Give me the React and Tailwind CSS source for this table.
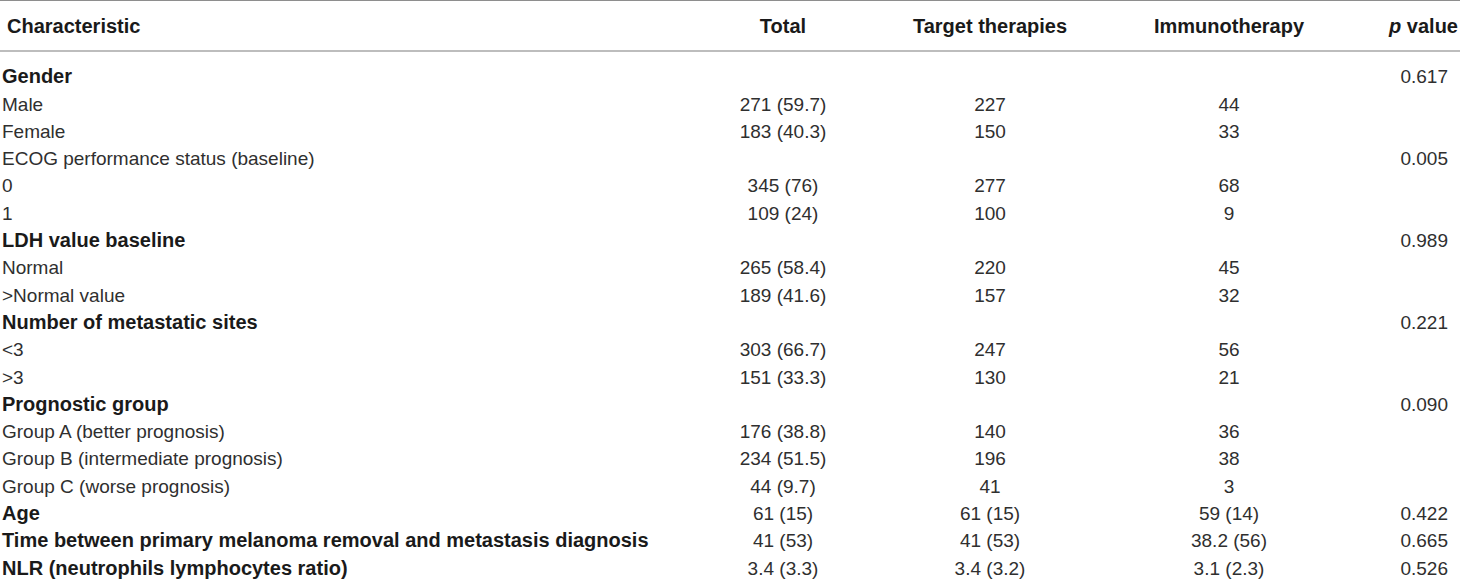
import React from "react";

const rows = [
  { label: "Gender", bold: true, p: "0.617" },
  { label: "Male", total: "271 (59.7)", target: "227", immuno: "44" },
  { label: "Female", total: "183 (40.3)", target: "150", immuno: "33" },
  { label: "ECOG performance status (baseline)", p: "0.005" },
  { label: "0", total: "345 (76)", target: "277", immuno: "68" },
  { label: "1", total: "109 (24)", target: "100", immuno: "9" },
  { label: "LDH value baseline", bold: true, p: "0.989" },
  { label: "Normal", total: "265 (58.4)", target: "220", immuno: "45" },
  { label: ">Normal value", total: "189 (41.6)", target: "157", immuno: "32" },
  { label: "Number of metastatic sites", bold: true, p: "0.221" },
  { label: "<3", total: "303 (66.7)", target: "247", immuno: "56" },
  { label: ">3", total: "151 (33.3)", target: "130", immuno: "21" },
  { label: "Prognostic group", bold: true, p: "0.090" },
  { label: "Group A (better prognosis)", total: "176 (38.8)", target: "140", immuno: "36" },
  { label: "Group B (intermediate prognosis)", total: "234 (51.5)", target: "196", immuno: "38" },
  { label: "Group C (worse prognosis)", total: "44 (9.7)", target: "41", immuno: "3" },
  { label: "Age", bold: true, total: "61 (15)", target: "61 (15)", immuno: "59 (14)", p: "0.422" },
  {
    label: "Time between primary melanoma removal and metastasis diagnosis",
    bold: true,
    total: "41 (53)",
    target: "41 (53)",
    immuno: "38.2 (56)",
    p: "0.665",
  },
  {
    label: "NLR (neutrophils lymphocytes ratio)",
    bold: true,
    total: "3.4 (3.3)",
    target: "3.4 (3.2)",
    immuno: "3.1 (2.3)",
    p: "0.526",
  },
];

export default function App() {
  return (
    <div className="w-[1460px] h-[582px] overflow-hidden bg-white font-['Liberation_Sans',Arial,sans-serif] text-[19px] leading-[27.3px] text-[#2f2f2f]">
      <table className="w-full table-fixed border-collapse">
        <colgroup>
          <col className="w-[683px]" />
          <col className="w-[200px]" />
          <col className="w-[214px]" />
          <col className="w-[264px]" />
          <col />
        </colgroup>
        <thead>
          <tr className="border-t border-[#8e8e8e] border-b-2 border-b-[#bdbdbd] text-[20px] text-[#1a1a1a]">
            <th className="pl-[7px] pt-[12px] pb-[10px] text-left font-bold">Characteristic</th>
            <th className="pt-[12px] pb-[10px] text-center font-bold">Total</th>
            <th className="pt-[12px] pb-[10px] text-center font-bold">Target therapies</th>
            <th className="pt-[12px] pb-[10px] text-center font-bold">Immunotherapy</th>
            <th className="pr-[2px] pt-[12px] pb-[10px] text-right font-bold">
              <i>p</i> value
            </th>
          </tr>
        </thead>
        <tbody>
          {rows.map((r, i) => {
            const pad = i === 0 ? "pt-[11px]" : "";
            return (
              <tr key={i}>
                <td
                  className={`${pad} pl-[2px] whitespace-nowrap ${
                    r.bold ? "font-bold text-[20px] text-[#1a1a1a]" : ""
                  }`}
                >
                  {r.label}
                </td>
                <td className={`${pad} text-center`}>{r.total}</td>
                <td className={`${pad} text-center`}>{r.target}</td>
                <td className={`${pad} text-center`}>{r.immuno}</td>
                <td className={`${pad} pr-[12px] text-right`}>{r.p}</td>
              </tr>
            );
          })}
        </tbody>
      </table>
    </div>
  );
}
